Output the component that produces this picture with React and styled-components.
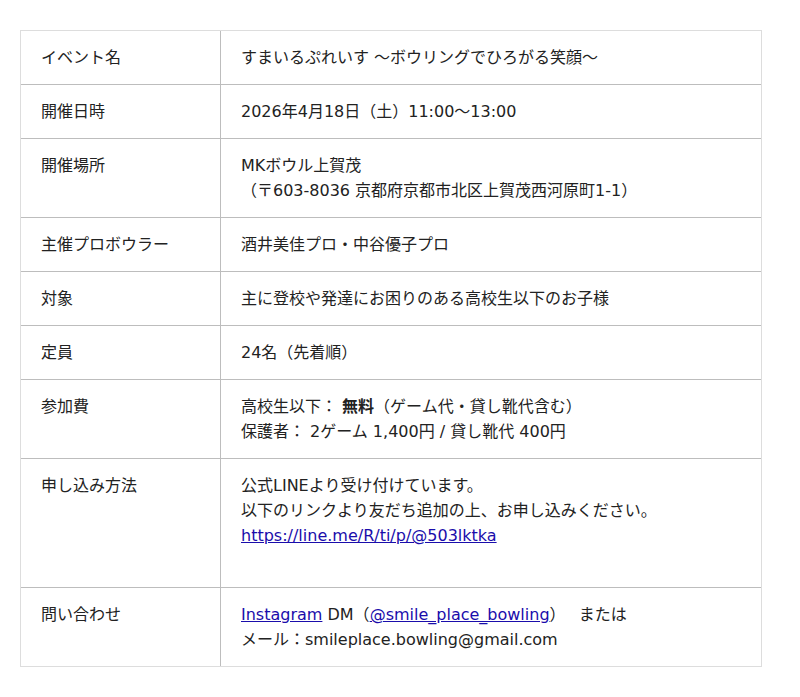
import React from "react";
import styled, { createGlobalStyle } from "styled-components";

const Global = createGlobalStyle`
  html, body { margin: 0; padding: 0; background: #fff; }
  body {
    font-family: "DejaVu Sans", "Noto Sans CJK JP", sans-serif;
    color: #222;
  }
`;

const Page = styled.div`
  padding: 30px 0 30px 20px;
`;

const Table = styled.div`
  width: 742px;
  box-sizing: border-box;
  border: 1px solid #dddddd;
`;

const Row = styled.div`
  display: grid;
  grid-template-columns: 200px 1fr;
  border-bottom: ${(p) => (p.$last ? "none" : "1px solid #bdbdbd")};
`;

const Label = styled.div`
  box-sizing: border-box;
  padding: 14px 20px;
  border-right: 1px solid #bdbdbd;
  font-size: 16px;
  line-height: 25px;
`;

const Value = styled.div`
  padding: 14px 20px;
  font-size: 16px;
  line-height: 25px;
`;

const Line = styled.div`
  min-height: 25px;
`;

const Strong = styled.strong`
  font-weight: bold;
`;

const Link = styled.a`
  color: #1a0dab;
  text-decoration: underline;
`;

const rows = [
  { label: "イベント名", value: <Line>すまいるぷれいす 〜ボウリングでひろがる笑顔〜</Line> },
  { label: "開催日時", value: <Line>2026年4月18日（土）11:00〜13:00</Line> },
  {
    label: "開催場所",
    value: (
      <>
        <Line>MKボウル上賀茂</Line>
        <Line>（〒603-8036 京都府京都市北区上賀茂西河原町1-1）</Line>
      </>
    ),
  },
  { label: "主催プロボウラー", value: <Line>酒井美佳プロ・中谷優子プロ</Line> },
  { label: "対象", value: <Line>主に登校や発達にお困りのある高校生以下のお子様</Line> },
  { label: "定員", value: <Line>24名（先着順）</Line> },
  {
    label: "参加費",
    value: (
      <>
        <Line>
          高校生以下： <Strong>無料</Strong>（ゲーム代・貸し靴代含む）
        </Line>
        <Line>保護者： 2ゲーム 1,400円 / 貸し靴代 400円</Line>
      </>
    ),
  },
  {
    label: "申し込み方法",
    value: (
      <>
        <Line>公式LINEより受け付けています。</Line>
        <Line>以下のリンクより友だち追加の上、お申し込みください。</Line>
        <Line>
          <Link href="#">https://line.me/R/ti/p/@503lktka</Link>
        </Line>
        <Line />
      </>
    ),
  },
  {
    label: "問い合わせ",
    value: (
      <>
        <Line>
          <Link href="#">Instagram</Link> DM（<Link href="#">@smile_place_bowling</Link>）　 または
        </Line>
        <Line>メール：smileplace.bowling@gmail.com</Line>
      </>
    ),
  },
];

export default function App() {
  return (
    <>
      <Global />
      <Page>
        <Table>
          {rows.map((r, i) => (
            <Row key={r.label} $last={i === rows.length - 1}>
              <Label>{r.label}</Label>
              <Value>{r.value}</Value>
            </Row>
          ))}
        </Table>
      </Page>
    </>
  );
}
